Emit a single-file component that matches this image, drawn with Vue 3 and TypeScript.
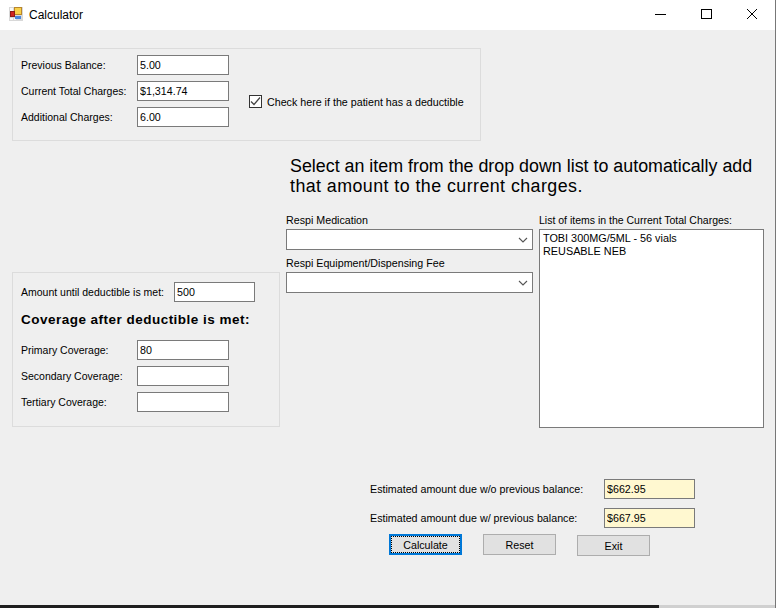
<script setup lang="ts">
import { ref } from 'vue'

const balances = ref([
  { label: 'Previous Balance:', value: '5.00' },
  { label: 'Current Total Charges:', value: '$1,314.74' },
  { label: 'Additional Charges:', value: '6.00' },
])
const coverage = ref([
  { label: 'Primary Coverage:', value: '80' },
  { label: 'Secondary Coverage:', value: '' },
  { label: 'Tertiary Coverage:', value: '' },
])
const combos = ['Respi Medication', 'Respi Equipment/Dispensing Fee']
const items = ['TOBI 300MG/5ML - 56 vials', 'REUSABLE NEB']
const hasDeductible = ref(true)
</script>

<template>
  <div class="window">
    <header class="titlebar">
      <svg class="app-icon" width="14" height="14" viewBox="0 0 14 14">
        <rect x="0" y="0" width="14" height="14" fill="#d8d8d8" />
        <rect x="1" y="1" width="3" height="3" fill="#f8f8f8" />
        <rect x="1" y="11" width="3" height="2" fill="#f8f8f8" />
        <rect x="5" y="11" width="2" height="2" fill="#f8f8f8" />
        <rect x="5.5" y="0.5" width="7" height="7" fill="#f8d048" stroke="#b8862c" />
        <rect x="1.5" y="4.5" width="4" height="5" fill="#d02420" stroke="#8c1c18" />
        <rect x="6" y="9" width="6" height="3" fill="#4c88dc" />
      </svg>
      <span class="title">Calculator</span>
      <div class="controls">
        <svg width="12" height="12" viewBox="0 0 12 12"><path d="M1 6.5h11" stroke="#000" fill="none" /></svg>
        <svg width="12" height="12" viewBox="0 0 12 12"><rect x="1.5" y="1.5" width="10" height="9" stroke="#000" fill="none" /></svg>
        <svg width="12" height="12" viewBox="0 0 12 12"><path d="M1 1l10 10M11 1L1 11" stroke="#000" fill="none" /></svg>
      </div>
    </header>

    <main class="form">
      <section class="group group-top">
        <div class="fields">
          <div v-for="row in balances" :key="row.label" class="field">
            <label>{{ row.label }}</label>
            <input v-model="row.value" type="text" />
          </div>
        </div>
        <label class="check">
          <span class="box">
            <svg v-if="hasDeductible" width="11" height="11" viewBox="0 0 11 11">
              <path d="M1 5.5l3 3 6-7" stroke="#444" stroke-width="1.2" fill="none" />
            </svg>
          </span>
          Check here if the patient has a deductible
        </label>
      </section>

      <div class="columns">
        <aside class="left">
          <section class="group group-deduct">
            <div class="field amount">
              <label>Amount until deductible is met:</label>
              <input type="text" value="500" />
            </div>
            <h4>Coverage after deductible is met:</h4>
            <div class="fields">
              <div v-for="row in coverage" :key="row.label" class="field">
                <label>{{ row.label }}</label>
                <input v-model="row.value" type="text" />
              </div>
            </div>
          </section>
        </aside>

        <div class="right">
          <h2>
            <span>Select an item from the drop down list to automatically add</span>
            <span class="second">that amount to the current charges.</span>
          </h2>
          <div class="pickers">
            <div class="combos">
              <div v-for="name in combos" :key="name" class="combo">
                <label>{{ name }}</label>
                <div class="select">
                  <svg width="10" height="6" viewBox="0 0 10 6"><path d="M1 1l4 4 4-4" stroke="#555" stroke-width="1.1" fill="none" /></svg>
                </div>
              </div>
            </div>
            <div class="items">
              <label>List of items in the Current Total Charges:</label>
              <div class="listbox">
                <div v-for="item in items" :key="item">{{ item }}</div>
              </div>
            </div>
          </div>
        </div>
      </div>

      <section class="totals">
        <div class="total">
          <label>Estimated amount due w/o previous balance:</label>
          <input class="readonly" type="text" value="$662.95" readonly />
        </div>
        <div class="total">
          <label>Estimated amount due w/ previous balance:</label>
          <input class="readonly" type="text" value="$667.95" readonly />
        </div>
        <div class="buttons">
          <button class="primary">Calculate</button>
          <button>Reset</button>
          <button class="exit">Exit</button>
        </div>
      </section>
    </main>

    <footer class="taskbar">
      <div class="task-dark"></div>
      <div class="task-light"></div>
    </footer>
  </div>
</template>

<style>
html, body { margin: 0; background: #f0f0f0; }
</style>

<style scoped>
.window {
  width: 776px;
  height: 608px;
  overflow: hidden;
  background: #efefef;
  font-family: "Liberation Sans", Arial, sans-serif;
  font-size: 10.7px;
  color: #000;
  box-sizing: border-box;
  border-right: 1px solid #777;
  display: flex;
  flex-direction: column;
  white-space: nowrap;
}
.titlebar {
  display: flex;
  align-items: center;
  height: 30px;
  flex: none;
  background: #fff;
  padding-left: 9px;
}
.app-icon { margin: -2px 6px 0 0; }
.title { font-size: 12px; }
.controls {
  margin: -2px 0 0 auto;
  display: flex;
  gap: 34px;
  padding-right: 17px;
}
.form { flex: 1; padding: 18px 0 0 12px; }
.group {
  border: 1px solid #dcdcdc;
  box-sizing: border-box;
}
.group-top {
  width: 469px;
  height: 93px;
  padding: 6px 8px;
  display: flex;
  align-items: flex-start;
}
.fields { display: flex; flex-direction: column; gap: 6px; }
.field { display: flex; align-items: center; }
.field label { width: 116px; font-size: 10.5px; }
input {
  width: 92px;
  height: 20px;
  box-sizing: border-box;
  border: 1px solid #7a7a7a;
  background: #fff;
  padding: 0 2px;
  font: inherit;
  outline: none;
}
.check {
  display: flex;
  align-items: center;
  margin: 41px 0 0 20px;
  gap: 5px;
}
.box {
  width: 13px;
  height: 13px;
  margin-top: -1px;
  box-sizing: border-box;
  border: 1px solid #333;
  background: #fff;
  display: flex;
  align-items: center;
  justify-content: center;
}
.columns { display: flex; margin-top: 15px; }
.left { width: 268px; padding-top: 116px; margin-right: 6px; }
.group-deduct {
  height: 155px;
  padding: 9px 8px;
}
.amount label { width: 153px; }
.amount input { width: 81px; }
h4 { margin: 10px 0 13px; font-size: 13.5px; letter-spacing: 0.48px; line-height: 15px; }
.right { width: 478px; }
h2 {
  margin: 0 0 16px 4px;
  font-size: 17.85px;
  font-weight: normal;
  line-height: 20px;
}
h2 span { display: block; }
h2 .second { letter-spacing: 0.43px; }
.pickers { display: flex; gap: 6px; }
.combos { width: 247px; display: flex; flex-direction: column; gap: 5px; }
.combo label, .items label { display: block; height: 14px; padding-top: 2px; margin-bottom: 1px; }
.items label { font-size: 10.5px; }
.select {
  height: 21px;
  box-sizing: border-box;
  border: 1px solid #7a7a7a;
  background: #fff;
  display: flex;
  align-items: center;
  justify-content: flex-end;
  padding-right: 4px;
}
.items { width: 225px; }
.listbox {
  height: 199px;
  box-sizing: border-box;
  border: 1px solid #7a7a7a;
  background: #fff;
  padding: 2px 3px;
  line-height: 13px;
  font-size: 10.85px;
}
.totals { margin: 51px 0 0 358px; }
.total { display: flex; align-items: center; margin-bottom: 9px; }
.total label { width: 234px; }
.total input { width: 91px; }
.readonly { background: #fff8d0; }
.buttons { display: flex; gap: 21px; margin: -3px 0 0 19px; }
button {
  width: 73px;
  height: 21px;
  box-sizing: border-box;
  border: 1px solid #adadad;
  background: #e1e1e1;
  font: inherit;
  padding: 0;
}
.primary { border: 2px solid #0078d7; outline: 1px dotted #000; outline-offset: -3px; }
.exit { margin-top: 1px; }
.taskbar { flex: none; height: 3px; display: flex; }
.task-dark { width: 659px; background: #1f1f1f; }
.task-light { flex: 1; background: #d0d0d0; }
</style>
